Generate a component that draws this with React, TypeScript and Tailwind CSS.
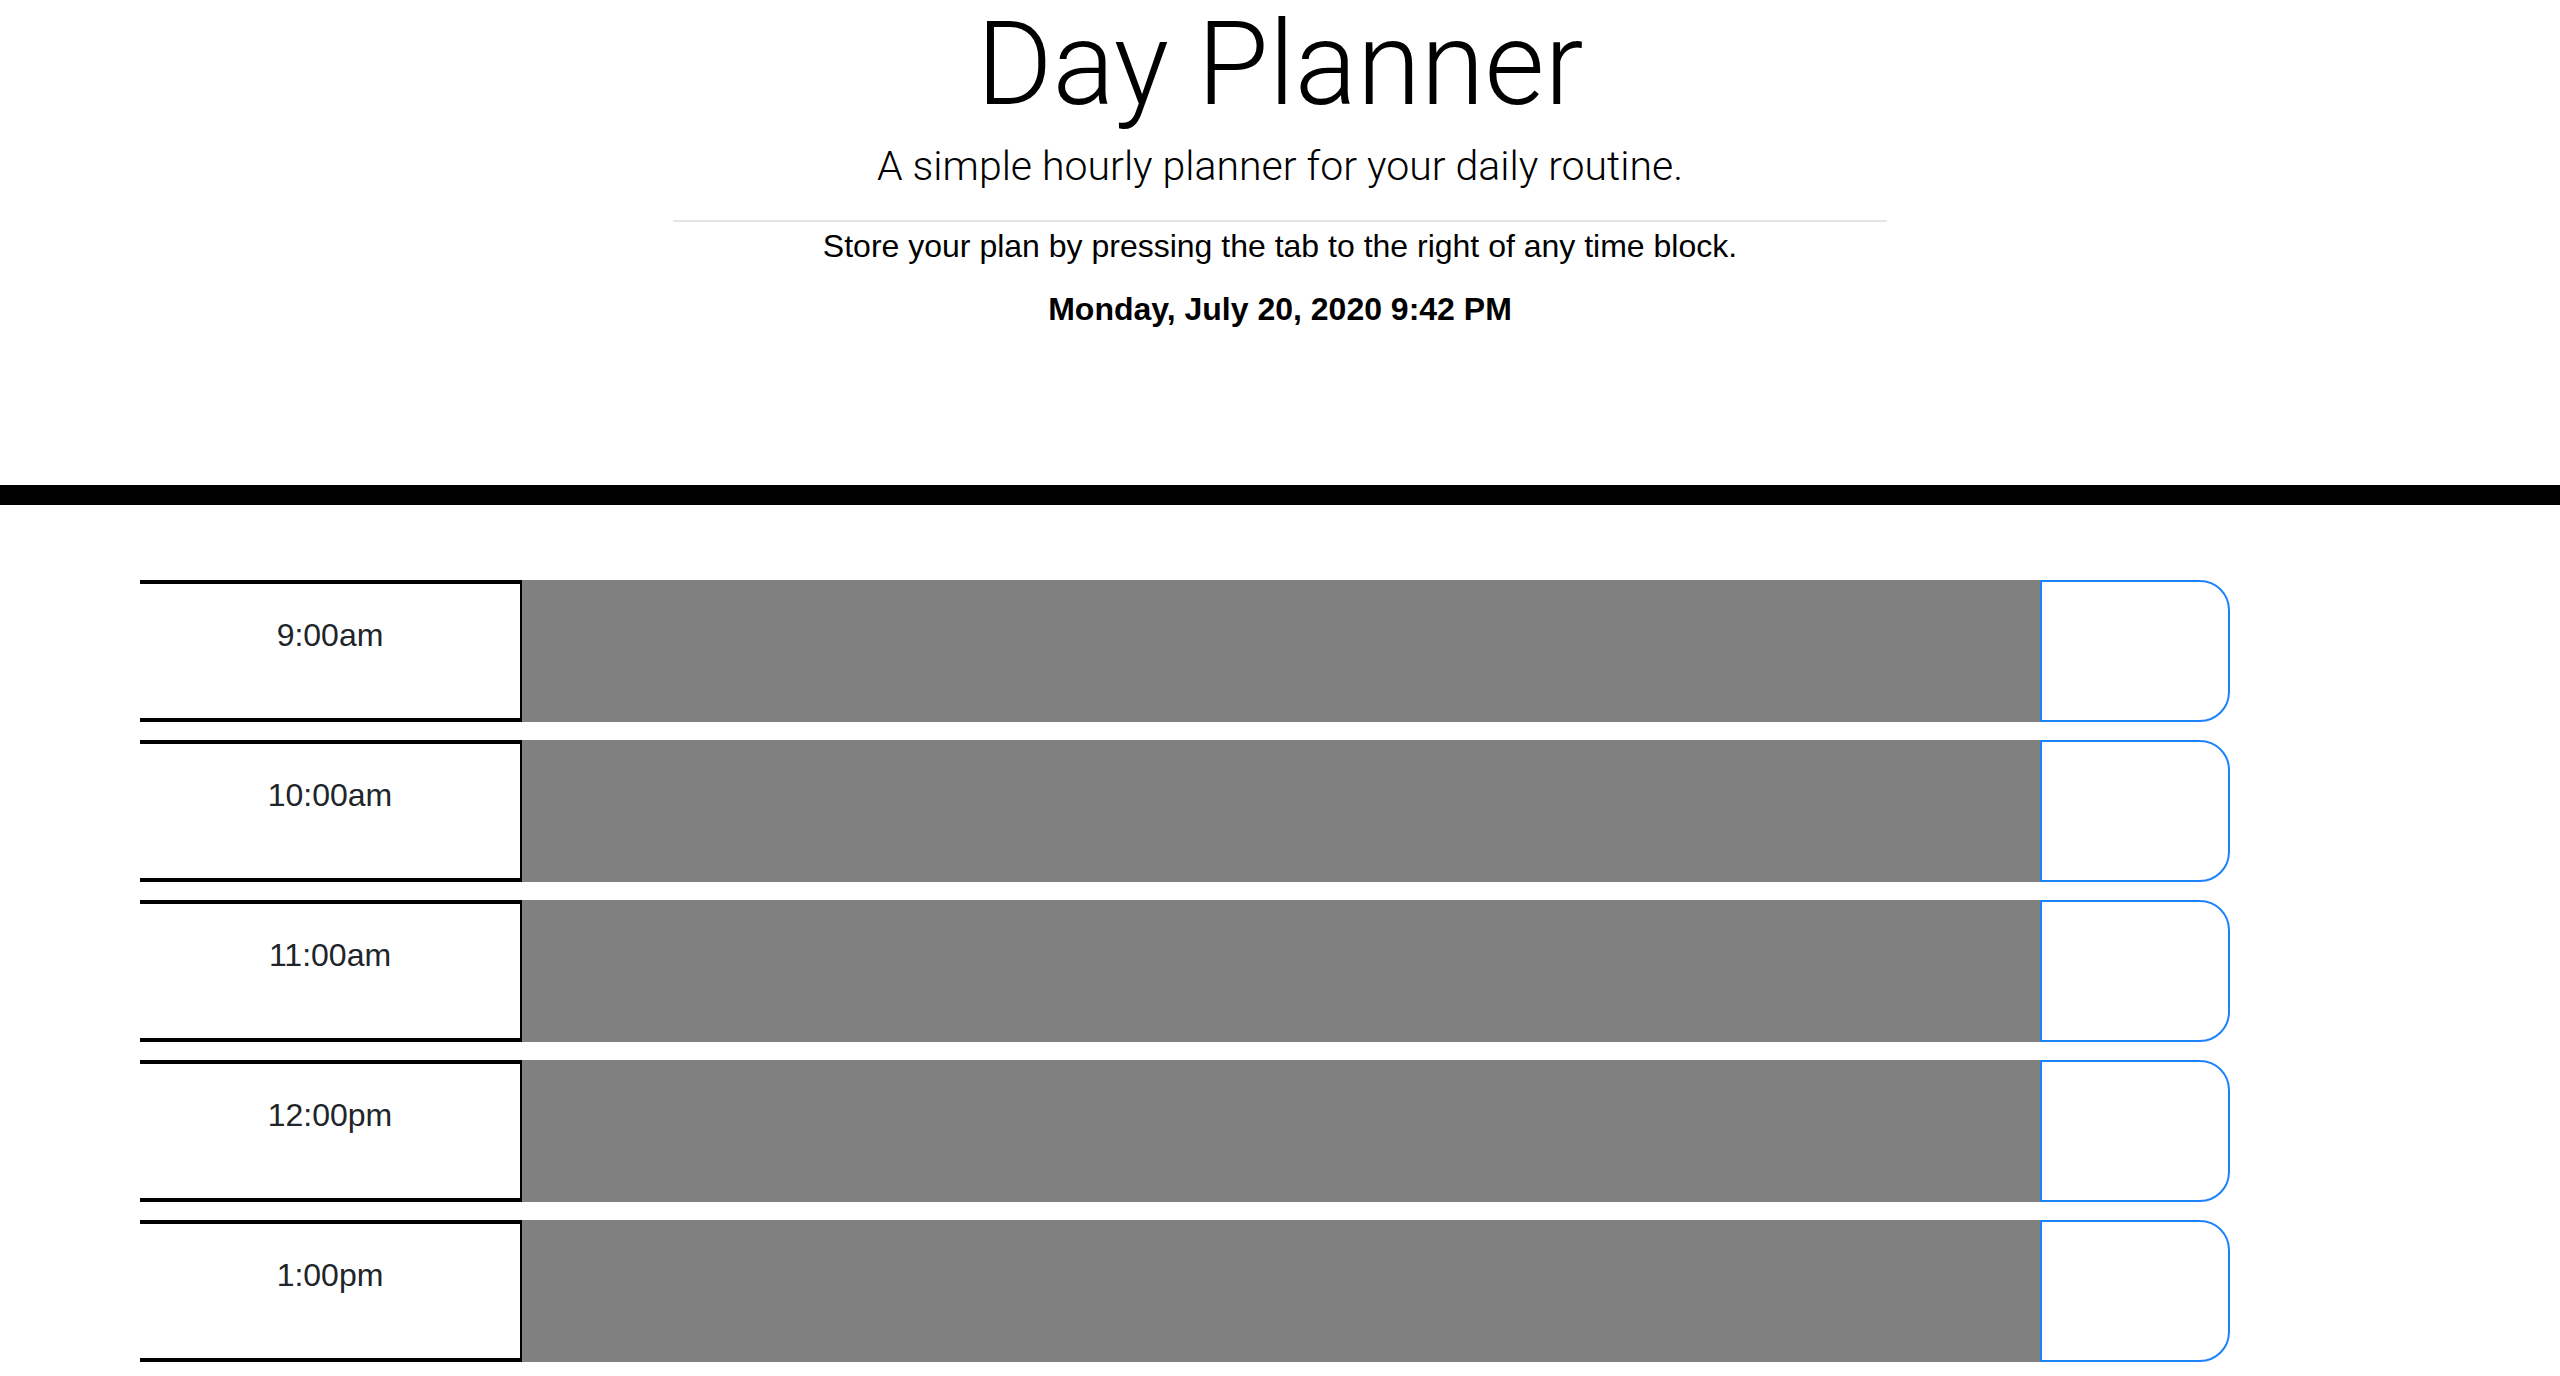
import React, { useState } from 'react';

const HOURS = ['9:00am', '10:00am', '11:00am', '12:00pm', '1:00pm'];

const TimeBlock: React.FC<{ hour: string }> = ({ hour }) => {
  const [text, setText] = useState('');

  return (
    <div className="flex h-[142px] mb-[18px]">
      <div className="w-[382px] shrink-0 border-t-4 border-b-4 border-r-2 border-black bg-white pt-[27px] text-center text-[32px] leading-[48px] text-[#212529]">
        {hour}
      </div>
      <textarea
        value={text}
        onChange={(e) => setText(e.target.value)}
        className="w-[1518px] shrink-0 resize-none bg-[#808080] p-4 text-[32px] text-white outline-none"
      />
      <button className="w-[190px] shrink-0 rounded-r-[30px] border-2 border-[#1b84fb] bg-white" aria-label={`Save ${hour}`} />
    </div>
  );
};

const App: React.FC = () => {
  return (
    <div className="min-h-screen w-full bg-white font-['Liberation_Sans',Arial,sans-serif] text-black">
      <header className="border-b-[20px] border-black pb-[152px] text-center">
        <h1 className="font-['Roboto',sans-serif] text-[116px] font-light leading-[128px]">Day Planner</h1>
        <p className="mt-[14px] font-['Roboto',sans-serif] text-[41px] font-light leading-[48px]">
          A simple hourly planner for your daily routine.
        </p>
        <hr className="mx-auto mt-[30px] w-[1214px] border-t-2 border-[#e5e5e5]" />
        <p className="text-[32px] leading-[48px]">Store your plan by pressing the tab to the right of any time block.</p>
        <p className="mt-[15px] text-[32px] font-bold leading-[48px]">Monday, July 20, 2020 9:42 PM</p>
      </header>

      <main className="pl-[140px] pt-[75px]">
        {HOURS.map((hour) => (
          <TimeBlock key={hour} hour={hour} />
        ))}
      </main>
    </div>
  );
};

export default App;
